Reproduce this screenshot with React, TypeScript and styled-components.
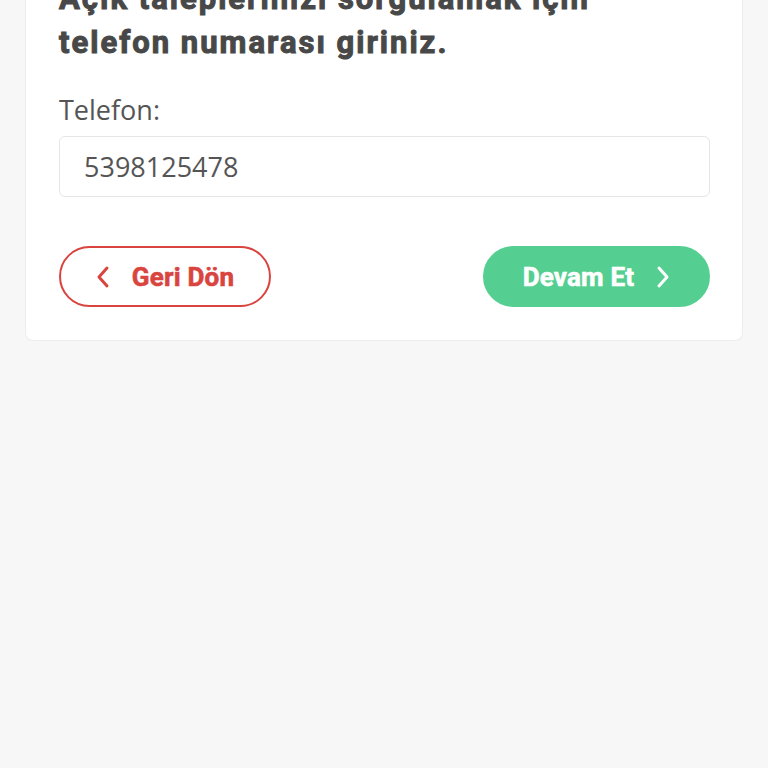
import React from 'react';
import styled, { createGlobalStyle } from 'styled-components';

const GlobalStyle = createGlobalStyle`
  html, body {
    margin: 0;
    padding: 0;
    background: #f7f7f7;
  }
  body {
    font-family: "Open Sans", "Noto Sans", sans-serif;
    overflow: hidden;
  }
`;

const Page = styled.div`
  padding: 0 25px;
  min-height: 768px;
`;

const Card = styled.section`
  box-sizing: border-box;
  margin-top: -55px;
  padding: 32px 32px 33px 33px;
  background: #fff;
  border: 1px solid #ededed;
  border-top: none;
  border-radius: 8px;
  display: flex;
  flex-direction: column;
`;

const Heading = styled.h2`
  margin: 0;
  font-family: Roboto, "Noto Sans", sans-serif;
  font-weight: 700;
  font-size: 31px;
  line-height: 44px;
  letter-spacing: 2px;
  -webkit-text-stroke: 1px #484848;
  color: #484848;
`;

const Label = styled.label`
  margin-top: 29px;
  font-size: 27px;
  line-height: 32px;
  font-weight: 400;
  color: #555;
`;

const Input = styled.input`
  box-sizing: border-box;
  margin-top: 10px;
  height: 61px;
  padding: 0 24px;
  border: 1px solid #e6e6e6;
  border-radius: 6px;
  background: #fff;
  font-family: "Open Sans", "Noto Sans", sans-serif;
  font-size: 27px;
  color: #555;
  outline: none;
`;

const Actions = styled.div`
  margin-top: 49px;
  display: flex;
  justify-content: space-between;
`;

const Button = styled.button<{ $variant: 'back' | 'next' }>`
  box-sizing: border-box;
  height: 61px;
  width: ${({ $variant }) => ($variant === 'back' ? '212px' : '227px')};
  border-radius: 31px;
  border: 2px solid ${({ $variant }) => ($variant === 'back' ? '#d9443f' : '#55cf91')};
  background: ${({ $variant }) => ($variant === 'back' ? '#fff' : '#55cf91')};
  color: ${({ $variant }) => ($variant === 'back' ? '#d9443f' : '#fff')};
  display: flex;
  align-items: center;
  justify-content: center;
  gap: 22px;
  font-family: Roboto, "Noto Sans", sans-serif;
  font-weight: 700;
  font-size: 26px;
  letter-spacing: 0.2px;
  -webkit-text-stroke: 0.6px currentColor;
  cursor: pointer;
  padding: 0;
`;

const Chevron = ({ dir }: { dir: 'left' | 'right' }) => (
  <svg width="14" height="24" viewBox="0 0 14 24" fill="none" stroke="currentColor" strokeWidth="3" strokeLinecap="round" strokeLinejoin="round">
    {dir === 'left' ? <path d="M11 3 L3 12 L11 21" /> : <path d="M3 3 L11 12 L3 21" />}
  </svg>
);

export default function App() {
  return (
    <>
      <GlobalStyle />
      <Page>
        <Card>
          <Heading>
            Açık taleplerinizi sorgulamak için
            <br />
            telefon numarası giriniz.
          </Heading>
          <Label htmlFor="phone">Telefon:</Label>
          <Input id="phone" defaultValue="5398125478" />
          <Actions>
            <Button $variant="back">
              <Chevron dir="left" />
              Geri Dön
            </Button>
            <Button $variant="next">
              Devam Et
              <Chevron dir="right" />
            </Button>
          </Actions>
        </Card>
      </Page>
    </>
  );
}
